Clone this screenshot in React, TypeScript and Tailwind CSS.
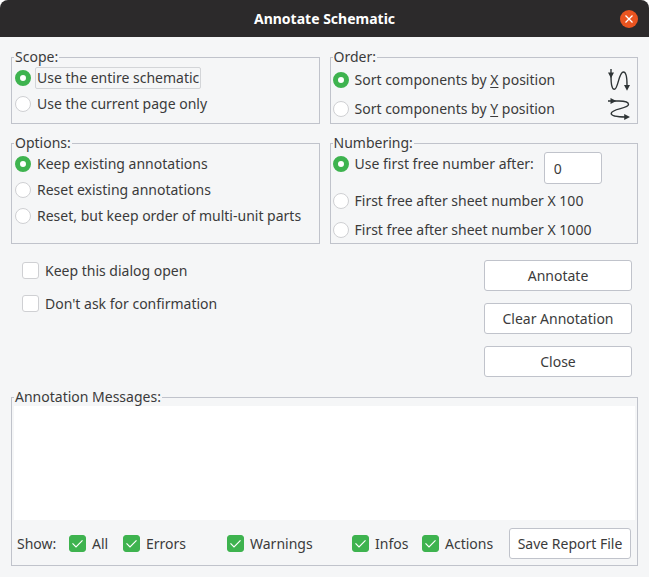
import type { ReactNode } from "react";

const radioClass =
  "size-4 shrink-0 appearance-none rounded-full border border-[#cfd0d3] bg-white checked:border-[5px] checked:border-[#3eb34f]";

function Group({ title, children }: { title: string; children: ReactNode }) {
  return (
    <fieldset className="min-w-0 border border-[#c0c3cb]">
      <legend className="ml-0.5 h-[18px] px-px leading-[18px]">{title}</legend>
      {children}
    </fieldset>
  );
}

type RadioProps = { name: string; checked?: boolean; focused?: boolean; children: ReactNode };

function Radio({ name, checked, focused, children }: RadioProps) {
  return (
    <label className="flex items-center gap-1">
      <input type="radio" name={name} defaultChecked={checked} className={radioClass} />
      <span
        className={
          focused
            ? "rounded-xs border border-[#d3d5d8] px-px leading-5 whitespace-nowrap"
            : "border border-transparent px-px leading-5 whitespace-nowrap"
        }
      >
        {children}
      </span>
    </label>
  );
}

function Check({ label, checked }: { label: string; checked?: boolean }) {
  return (
    <label className="flex items-center gap-1.5 whitespace-nowrap">
      <span className="grid size-[17px] shrink-0">
        <input
          type="checkbox"
          defaultChecked={checked}
          className="peer col-start-1 row-start-1 size-[17px] appearance-none rounded-[3px] border border-[#cfd0d3] bg-white checked:border-[#3eb34f] checked:bg-[#3eb34f]"
        />
        <svg
          viewBox="0 0 17 17"
          className="pointer-events-none invisible col-start-1 row-start-1 size-[17px] peer-checked:visible"
          fill="none"
          stroke="white"
          strokeWidth="1.2"
        >
          <path d="M3.5 8.3 7 11.8 13.5 5.3" />
        </svg>
      </span>
      {label}
    </label>
  );
}

function Button({ children }: { children: ReactNode }) {
  return (
    <button
      type="button"
      className="h-[31px] rounded-[3px] border border-[#c0c3cb] bg-white px-1.5 whitespace-nowrap"
    >
      {children}
    </button>
  );
}

function SortXIcon() {
  return (
    <svg viewBox="0 0 24 24" className="size-6 shrink-0" fill="none" stroke="#2e3436" strokeWidth="1.4">
      <path d="M4 1V8C4 16 5 21.3 7.3 21.3C11.3 21.3 11.5 4 16.5 4C19.5 4 20 9 20 17" />
      <path d="M1 4.5H7L4 10.3ZM17 17H23L20 22.8Z" fill="#2e3436" stroke="none" />
    </svg>
  );
}

function SortYIcon() {
  return (
    <svg viewBox="0 0 24 24" className="size-6 shrink-0" fill="none" stroke="#2e3436" strokeWidth="1.4">
      <path d="M1 4H12C18 4 21.5 5 21.5 7.5C21.5 11.7 4.2 11.5 4.2 16.5C4.2 19.4 10 20 19 20" />
      <path d="M3.5 1V7L9.3 4ZM17.2 17V23L23 20Z" fill="#2e3436" stroke="none" />
    </svg>
  );
}

export default function App() {
  return (
    <div className="flex min-h-screen flex-col bg-white font-['Noto_Sans',sans-serif] text-sm text-[#3b3b3b]">
      <header className="grid h-[37px] grid-cols-[1fr_auto_1fr] items-center rounded-t-lg bg-[#2c2a2b] px-[11px] text-white">
        <h1 className="col-start-2 font-bold">Annotate Schematic</h1>
        <button
          type="button"
          aria-label="Close window"
          className="flex size-[18px] items-center justify-center justify-self-end rounded-full bg-[#e95420]"
        >
          <svg viewBox="0 0 10 10" className="size-2.5" stroke="white" strokeWidth="1.3">
            <path d="M1.5 1.5 8.5 8.5M8.5 1.5 1.5 8.5" />
          </svg>
        </button>
      </header>

      <main className="flex flex-1 flex-col bg-[#f5f6f7] p-[11px]">
        <div className="grid grid-cols-2 gap-2.5">
          <Group title="Scope:">
            <div className="grid auto-rows-[24px] gap-0.5 px-[3px] pb-[7px]">
              <Radio name="scope" checked focused>
                Use the entire schematic
              </Radio>
              <Radio name="scope">Use the current page only</Radio>
            </div>
          </Group>

          <Group title="Order:">
            <div className="grid grid-cols-[1fr_auto] auto-rows-[27px] items-center gap-y-0.5 pr-1.5 pb-px pl-0.5">
              <Radio name="order" checked>
                Sort components by <u className="underline-offset-2">X</u> position
              </Radio>
              <SortXIcon />
              <Radio name="order">
                Sort components by <u className="underline-offset-2">Y</u> position
              </Radio>
              <SortYIcon />
            </div>
          </Group>

          <Group title="Options:">
            <div className="grid auto-rows-[24px] gap-0.5 px-[3px]">
              <Radio name="options" checked>
                Keep existing annotations
              </Radio>
              <Radio name="options">Reset existing annotations</Radio>
              <Radio name="options">Reset, but keep order of multi-unit parts</Radio>
            </div>
          </Group>

          <Group title="Numbering:">
            <div className="grid auto-rows-[27px] grid-rows-[33px] gap-0.5 px-0.5">
              <div className="flex items-start gap-2">
                <div className="grid h-6">
                  <Radio name="numbering" checked>
                    Use first free number after:
                  </Radio>
                </div>
                <input
                  type="text"
                  aria-label="First free number"
                  defaultValue="0"
                  className="h-8 w-[58px] rounded-[3px] border border-[#c0c3cb] bg-white px-[9px]"
                />
              </div>
              <Radio name="numbering">First free after sheet number X 100</Radio>
              <Radio name="numbering">First free after sheet number X 1000</Radio>
            </div>
          </Group>
        </div>

        <div className="flex items-start justify-between pt-4 pr-1.5 pb-[11px] pl-[11px]">
          <div className="grid auto-rows-[21px] gap-3">
            <Check label="Keep this dialog open" />
            <Check label="Don't ask for confirmation" />
          </div>
          <div className="grid w-[148px] gap-3">
            <Button>Annotate</Button>
            <Button>Clear Annotation</Button>
            <Button>Close</Button>
          </div>
        </div>

        <Group title="Annotation Messages:">
          <textarea
            readOnly
            aria-label="Annotation messages"
            className="mx-0.5 block h-[114px] w-[calc(100%-4px)] resize-none bg-white"
          />
          <div className="grid grid-cols-[52px_54px_104fr_125fr_70px_87px_122px] items-center pt-2 pr-1.5 pb-1.5 pl-[5px]">
            <span>Show:</span>
            <Check label="All" checked />
            <Check label="Errors" checked />
            <Check label="Warnings" checked />
            <Check label="Infos" checked />
            <Check label="Actions" checked />
            <Button>Save Report File</Button>
          </div>
        </Group>
      </main>
    </div>
  );
}
